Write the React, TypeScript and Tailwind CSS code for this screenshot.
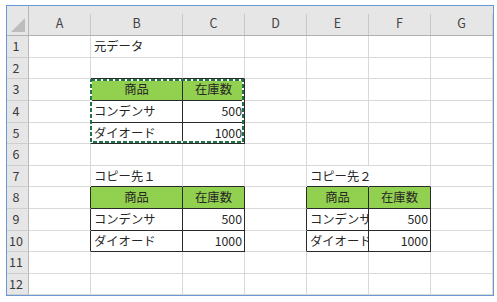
import React from "react";

type CellData = { text: string; align?: "left" | "center" | "right"; green?: boolean; clip?: boolean };

const data: Record<string, CellData> = {
  "1-1": { text: "元データ" },
  "3-1": { text: "商品", align: "center", green: true },
  "3-2": { text: "在庫数", align: "center", green: true },
  "4-1": { text: "コンデンサ" },
  "4-2": { text: "500", align: "right" },
  "5-1": { text: "ダイオード" },
  "5-2": { text: "1000", align: "right" },
  "7-1": { text: "コピー先１" },
  "8-1": { text: "商品", align: "center", green: true },
  "8-2": { text: "在庫数", align: "center", green: true },
  "9-1": { text: "コンデンサ" },
  "9-2": { text: "500", align: "right" },
  "10-1": { text: "ダイオード" },
  "10-2": { text: "1000", align: "right" },
  "7-4": { text: "コピー先２" },
  "8-4": { text: "商品", align: "center", green: true, clip: true },
  "8-5": { text: "在庫数", align: "center", green: true },
  "9-4": { text: "コンデンサ", clip: true },
  "9-5": { text: "500", align: "right" },
  "10-4": { text: "ダイオード", clip: true },
  "10-5": { text: "1000", align: "right" },
};

const tables = [
  { r1: 3, r2: 5, c1: 1, c2: 2 },
  { r1: 8, r2: 10, c1: 1, c2: 2 },
  { r1: 8, r2: 10, c1: 4, c2: 5 },
];

const letters = ["A", "B", "C", "D", "E", "F", "G"];
const rows = [1, 2, 3, 4, 5, 6, 7, 8, 9, 10, 11, 12];

const font = { fontFamily: '"Noto Sans CJK JP", "Noto Sans", sans-serif' };

function Cell({ r, c }: { r: number; c: number }) {
  const d = data[`${r}-${c}`];
  const rightBlack = tables.some((t) => r >= t.r1 && r <= t.r2 && c >= t.c1 - 1 && c <= t.c2);
  const bottomBlack = tables.some((t) => c >= t.c1 && c <= t.c2 && r >= t.r1 - 1 && r <= t.r2);
  const hideRight = r === 7 && c === 4;
  const rightCls = hideRight ? "border-r-white" : rightBlack ? "border-r-[#2a2a2a]" : "border-r-[#d9d9d9]";
  const bottomCls = bottomBlack ? "border-b-[#2a2a2a]" : "border-b-[#d9d9d9]";
  const align = d?.align ?? "left";
  const alignCls =
    align === "center" ? "justify-center" : align === "right" ? "justify-end pr-[2px]" : "justify-start pl-[3px]";
  return (
    <div
      className={`relative flex items-center border-r border-b ${rightCls} ${bottomCls} ${alignCls} ${
        d?.green ? "bg-[#92d050]" : ""
      } ${d?.clip ? "overflow-hidden" : "overflow-visible"} whitespace-nowrap text-[12.3px] leading-none text-[#262626]`}
    >
      {d ? <span className="relative z-10">{d.text}</span> : null}
    </div>
  );
}

export default function App() {
  return (
    <div className="w-[497px] h-[302px] bg-white pt-[5px] pl-[6px]" style={font}>
      <div className="w-[488px] border border-[#6a97d6]">
        <div className="relative grid grid-cols-[22px_62px_92px_62px_62px_62px_62px_62px] grid-rows-[30px_22px_21px_22px_22px_21px_22px_21px_22px_22px_21px_22px_21px]">
          {/* corner */}
          <div className="relative bg-[#e6e6e6] border-r border-b border-r-[#b8b8b8] border-b-[#b0b0b0]">
            <svg className="absolute left-0 top-0" width="21" height="29" viewBox="0 0 21 29">
              <polygon points="4,26 18,12 18,26" fill="#bdbdbd" />
            </svg>
          </div>
          {letters.map((l, i) => (
            <div key={l} className="flex bg-[#e6e6e6] border-b border-b-[#b0b0b0]">
              <div className="flex-1 flex items-center justify-center pt-[6px] text-[12.5px] leading-none text-[#444]">
                {l}
              </div>
              <div className={`w-px self-end h-[21px] ${i === 6 ? "bg-[#d0d0d0]" : "bg-[#c8c8c8]"}`} />
            </div>
          ))}
          {rows.map((r) => (
            <React.Fragment key={r}>
              <div className="flex items-center justify-center pr-[3px] bg-[#e6e6e6] border-r border-b border-r-[#b8b8b8] border-b-[#cfcfcf] text-[12.5px] leading-none text-[#3a3a3a]">
                {r}
              </div>
              {letters.map((_, c) => (
                <Cell key={c} r={r} c={c} />
              ))}
            </React.Fragment>
          ))}
          <svg className="absolute left-[83px] top-[73px] z-20" width="154" height="64" viewBox="0 0 154 64">
            <rect x="1" y="1" width="152" height="62" fill="none" stroke="#ffffff" strokeWidth="2" />
            <rect x="1" y="1" width="152" height="62" fill="none" stroke="#217346" strokeWidth="2" strokeDasharray="4 2" />
          </svg>
        </div>
      </div>
    </div>
  );
}
